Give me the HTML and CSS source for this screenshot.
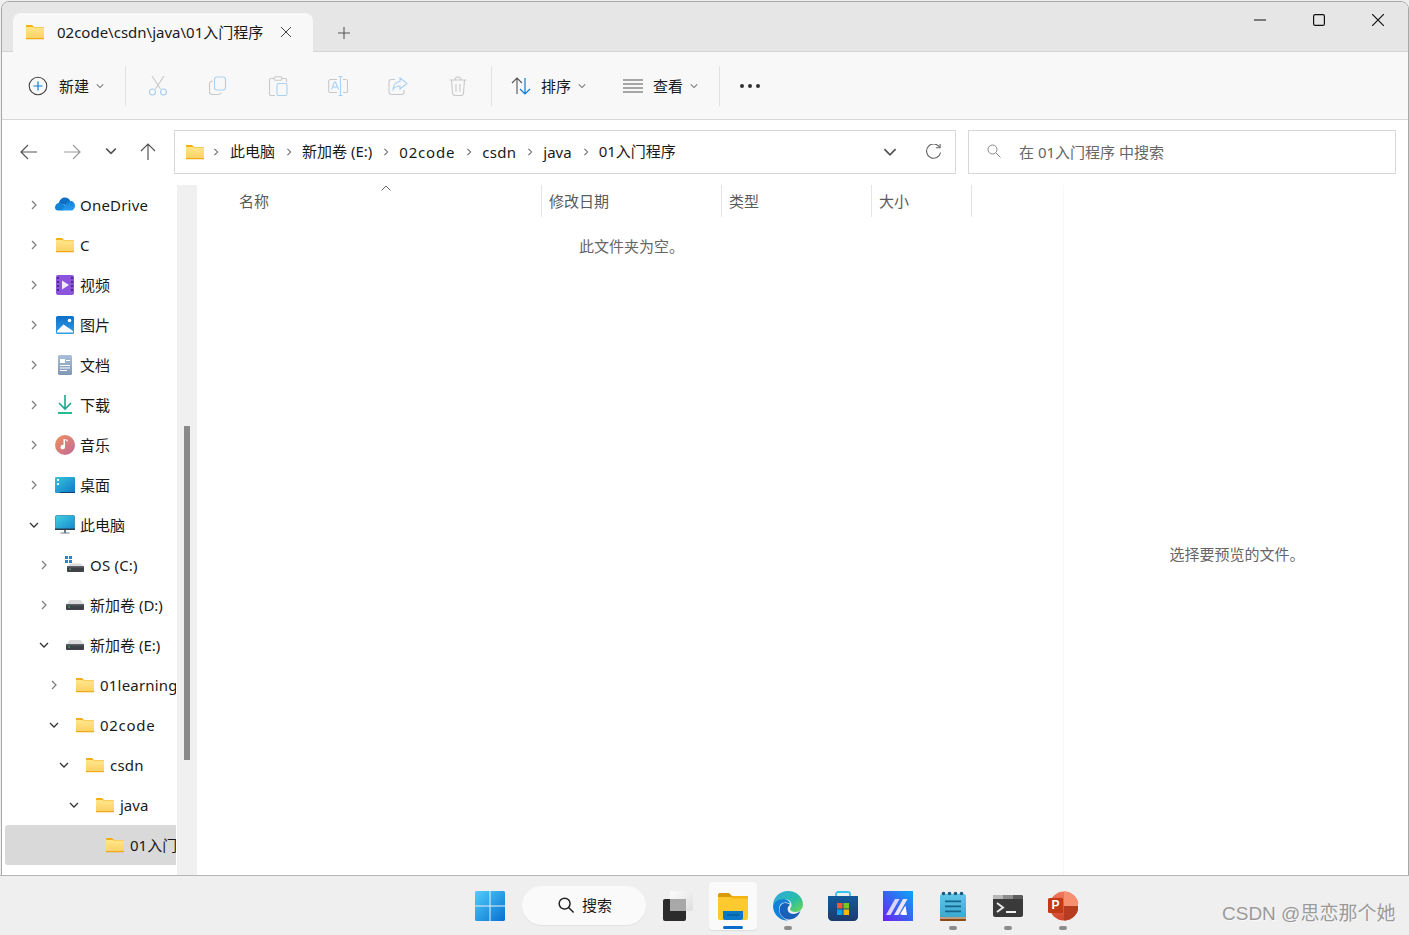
FILE: index.html
```html
<!DOCTYPE html>
<html lang="zh-CN">
<head>
<meta charset="utf-8">
<title>01入门程序 - 文件资源管理器</title>
<link rel="stylesheet" href="styles.css">
</head>
<body>
<svg class="sprite" aria-hidden="true">
  <defs>
    <linearGradient id="gFolder" x1="0" y1="0" x2="0" y2="1"><stop offset="0" stop-color="#ffe68a"/><stop offset="1" stop-color="#fcd064"/></linearGradient>
    <linearGradient id="gCloud" x1="0" y1="0" x2="0" y2="1"><stop offset="0" stop-color="#0f7fd8"/><stop offset="1" stop-color="#2a9df0"/></linearGradient>
    <linearGradient id="gMusic" x1="0" y1="0" x2="1" y2="1"><stop offset="0" stop-color="#f0905a"/><stop offset="1" stop-color="#c0699c"/></linearGradient>
    <linearGradient id="gDesk" x1="0" y1="0" x2="1" y2="1"><stop offset="0" stop-color="#37c6dc"/><stop offset="1" stop-color="#0f78c8"/></linearGradient>
    <linearGradient id="gDoc" x1="0" y1="0" x2="0" y2="1"><stop offset="0" stop-color="#a9bfd8"/><stop offset="1" stop-color="#7f98b4"/></linearGradient>
    <linearGradient id="gPic" x1="0" y1="0" x2="0" y2="1"><stop offset="0" stop-color="#0f6fc8"/><stop offset="1" stop-color="#2f9fe8"/></linearGradient>
    <linearGradient id="gMon" x1="0" y1="0" x2="1" y2="1"><stop offset="0" stop-color="#44d0e0"/><stop offset="1" stop-color="#1288d0"/></linearGradient>
    <linearGradient id="gWin" x1="0" y1="0" x2="1" y2="1"><stop offset="0" stop-color="#52cdfb"/><stop offset="1" stop-color="#0670d0"/></linearGradient>
    <linearGradient id="gEdge" x1="0" y1="0" x2="1" y2="1"><stop offset="0" stop-color="#2fa8e6"/><stop offset=".55" stop-color="#28bca8"/><stop offset="1" stop-color="#6fd84e"/></linearGradient>
    <linearGradient id="gMa" x1="1" y1="0" x2="0" y2="1"><stop offset="0" stop-color="#0aa6f5"/><stop offset="1" stop-color="#6a20f0"/></linearGradient>
    <linearGradient id="gStore" x1="0" y1="0" x2="0" y2="1"><stop offset="0" stop-color="#125a9c"/><stop offset="1" stop-color="#1c3a6c"/></linearGradient>
    <linearGradient id="gNote" x1="0" y1="0" x2="0" y2="1"><stop offset="0" stop-color="#5ec5e8"/><stop offset="1" stop-color="#3aa8d0"/></linearGradient>
    <linearGradient id="gPpt" x1="0" y1="0" x2="0" y2="1"><stop offset="0" stop-color="#f2785a"/><stop offset="1" stop-color="#d0452a"/></linearGradient>
    <linearGradient id="gView" x1="0" y1="0" x2="1" y2="1"><stop offset="0" stop-color="#fcfcfc"/><stop offset="1" stop-color="#dedede"/></linearGradient>
  </defs>
  <symbol id="folder" viewBox="0 0 20 16">
    <path d="M1 3V1.600C1 1.200 1.300 1 1.700 1H7l2 2z" fill="#f5ae16"/>
    <path d="M1 3h18v12H1z" fill="url(#gFolder)"/>
    <path d="M1 14h18v1.200H1z" fill="#efa91d"/>
    <path d="M8 3.600h11V3H8z" fill="#f5b52a"/>
  </symbol>
  <symbol id="chevR" viewBox="0 0 10 10"><path d="M3 1l4 4-4 4" fill="none" stroke="currentColor" stroke-width="1.300"/></symbol>
  <symbol id="chevD" viewBox="0 0 10 10"><path d="M1 3l4 4 4-4" fill="none" stroke="currentColor" stroke-width="1.300"/></symbol>
  <symbol id="onedrive" viewBox="0 0 20 14">
    <path d="M4 5.500C4.600 2.500 7 .5 10 .5c2.400 0 4.400 1.300 5.300 3.500L11 8 3 7z" fill="#0e6fc4"/>
    <path d="M0 10.500C0 8 2 6 4.600 6.100 6 6.200 9 8 11.500 9.500L8 13.500H3C1.300 13.500 0 12.200 0 10.500z" fill="#1085d8"/>
    <path d="M7 13.500l4-6.500c1-1.500 2.500-3 4.500-3 2.500 0 4.500 2 4.500 5 0 2.500-2 4.500-4 4.500z" fill="url(#gCloud)"/>
  </symbol>
  <symbol id="video" viewBox="0 0 20 20">
    <rect width="18" height="20" x="1" rx="2" fill="#8c54dc"/>
    <path d="M2 2h2v2H2zM2 6h2v2H2zM2 10h2v2H2zM2 14h2v2H2zM16 2h2v2h-2zM16 6h2v2h-2zM16 10h2v2h-2zM16 14h2v2h-2z" fill="#4a2a8c"/>
    <path d="M7 5.500l7 4.500-7 4.500z" fill="#f0e8fc"/>
  </symbol>
  <symbol id="picture" viewBox="0 0 20 20">
    <rect width="18" height="18" x="1" y="1" rx="1.500" fill="url(#gPic)"/>
    <path d="M2 17.500V16l6.500-6.500L18 16v1.500z" fill="#fff"/>
    <circle cx="14.500" cy="5.500" r="1.800" fill="#fff"/>
  </symbol>
  <symbol id="doc" viewBox="0 0 20 20">
    <rect x="3" y="0" width="14" height="20" rx="1.500" fill="url(#gDoc)"/>
    <path d="M5 4h5v4H5zM11 5h4v1h-4zM5 10h10v1H5zM5 12.500h10v1H5zM5 15h7v1H5z" fill="#fff"/>
  </symbol>
  <symbol id="download" viewBox="0 0 20 20">
    <path d="M10 0v13.500M4 8l6 6 6-6" fill="none" stroke="#1aa98c" stroke-width="1.600"/>
    <path d="M3 18h14" stroke="#24bd90" stroke-width="1.800"/>
  </symbol>
  <symbol id="music" viewBox="0 0 20 20">
    <circle cx="10" cy="10" r="10" fill="url(#gMusic)"/>
    <path d="M10 4.500v7.500a2.200 2.200 0 1 1-1.500-2V4l4 .8v2.200z" fill="#fff"/>
  </symbol>
  <symbol id="desktop" viewBox="0 0 20 16">
    <rect width="20" height="16" fill="url(#gDesk)" rx="1"/>
    <path d="M2 2h2v2H2zM2 6h2v2H2z" fill="#fff"/>
    <path d="M5 15h15v1H5z" fill="#123e70"/>
  </symbol>
  <symbol id="pc" viewBox="0 0 20 20">
    <rect x=".5" y=".5" width="19" height="14" rx="1" fill="url(#gMon)" stroke="#0f7090" stroke-width=".6"/>
    <path d="M0 13.500h20v1.500H0z" fill="#2a3a4a"/>
    <path d="M9 15h2v2.500H9zM5.500 17.500h9v1h-9z" fill="#6a7a8a"/>
  </symbol>
  <symbol id="drive" viewBox="0 0 20 10">
    <path d="M2 4L4 .5C4.200 .2 4.500 0 5 0h10c.5 0 .8.2 1 .5L19 4z" fill="#dcdcdc"/>
    <path d="M1 4h18v5c0 .5-.5 1-1 1H2c-.5 0-1-.5-1-1z" fill="#3e4248"/>
    <path d="M1 4h18v1.500H1z" fill="#5e6268"/>
    <path d="M3.500 6.500h1.200v1.200H3.500z" fill="#3fe05a"/>
  </symbol>
  <symbol id="osdrive" viewBox="0 0 20 20">
    <path d="M0 1h3v3H0zM4 1h3v3H4zM0 5h3v3H0zM4 5h3v3H4z" fill="#1e88d8"/>
    <path d="M3 11l2-2.500h11l2 2.500z" fill="#dcdcdc"/>
    <path d="M2 11h17v5c0 .5-.5 1-1 1H3c-.5 0-1-.5-1-1z" fill="#3e4248"/>
    <path d="M2 11h17v1.500H2z" fill="#5e6268"/>
    <path d="M4.500 13.500h1.200v1.200H4.500z" fill="#3fe05a"/>
  </symbol>
  <symbol id="win11" viewBox="0 0 30 30">
    <path d="M0 1.500C0 .7.700 0 1.500 0H14.500v14.500H0zM15.500 0H28.500c.8 0 1.500.7 1.500 1.500V14.500H15.500zM0 15.500H14.500V30H1.500C.7 30 0 29.300 0 28.500zM15.500 15.500H30V28.500c0 .8-.7 1.500-1.500 1.500H15.500z" fill="url(#gWin)"/>
  </symbol>
  <symbol id="taskview" viewBox="0 0 34 30">
    <rect x="0" y="8" width="23" height="22" rx="2" fill="#2b2b2b"/>
    <rect x="7" y="0" width="23" height="20" rx="1.500" fill="url(#gView)"/>
    <rect x="7" y="8" width="16" height="12" fill="#a8a8a8"/>
  </symbol>
  <symbol id="explorer" viewBox="0 0 30 28">
    <path d="M0 3C0 1.500 1 1 2 1h9l4 4H0z" fill="#d89a08"/>
    <path d="M0 5h13l3-1h14v22c0 1-1 2-2 2H2c-1 0-2-1-2-2z" fill="#fcc92e"/>
    <path d="M14 4h16v2.500H13z" fill="#f2b410"/>
    <path d="M5 19h20v7c0 1-1 2-2 2H7c-1 0-2-1-2-2z" fill="#0a78c8"/>
    <path d="M9 22.500h12v1H9z" fill="#0a4a80"/>
  </symbol>
  <symbol id="edge" viewBox="0 0 30 30">
    <path d="M15 0c8.500 0 15 6 15 13.500 0 5-4 7.500-7.500 7.500-3 0-5.500-1-5.500-3 0-1 1.500-1.500 1.500-4C18.500 10 15 8 11 8 5 8 1 12 0 15 0 6.500 6.500 0 15 0z" fill="url(#gEdge)"/>
    <path d="M0 15c1-4 5-7 10-7 4 0 7 2 7 5-1-1-3-1.500-5-1.500-4 0-6 3-6 7 0 5 4 9 9 11-8 .5-15-6-15-15z" fill="#1380d8"/>
    <path d="M15 28.500c-5-1-8.500-5-8.500-9.500 0-4 2.500-7 5.500-7 3 0 4 1 5 2-2 1-3 3-2 6 1 2.500 5 3.500 8 2.500 2-.7 3.500-1.500 4.500-3-1.500 5-6 9.500-12.500 9z" fill="#1a5fb8"/>
  </symbol>
  <symbol id="store" viewBox="0 0 30 30">
    <path d="M8 5V3c0-1 1-2 2-2h10c1 0 2 1 2 2v2" fill="none" stroke="#38c0f0" stroke-width="1.800"/>
    <path d="M0 5h30v21c0 2-2 4-4 4H4c-2 0-4-2-4-4z" fill="url(#gStore)"/>
    <path d="M9 12h5.500v5.500H9z" fill="#f05a28"/>
    <path d="M15.500 12H21v5.500h-5.500z" fill="#7cc520"/>
    <path d="M9 18.500h5.500V24H9z" fill="#0aa0f0"/>
    <path d="M15.500 18.500H21V24h-5.500z" fill="#fdb900"/>
  </symbol>
  <symbol id="ma" viewBox="0 0 30 30">
    <rect width="30" height="30" fill="url(#gMa)"/>
    <path d="M3 24L12 8h4.500L7.500 24z" fill="#d8d4fa"/>
    <path d="M11 24L20 8h4.500L15.500 24z" fill="#e8e6fc"/>
    <path d="M22.500 14.500l1.500 9.500h-4.500l-2.500-.8z" fill="#fff"/>
  </symbol>
  <symbol id="notepad" viewBox="0 0 30 30">
    <path d="M4 3h22c1 0 2 1 2 2v22H2V5c0-1 1-2 2-2z" fill="url(#gNote)"/>
    <path d="M2 26h26v3c0 .5-.5 1-1 1H3c-.5 0-1-.5-1-1z" fill="#8c4a14"/>
    <path d="M2 26.500h26v1H2z" fill="#f0f0f0"/>
    <g fill="#1a5a80"><circle cx="5.500" cy="2.500" r="1.800"/><circle cx="11.500" cy="2.500" r="1.800"/><circle cx="17.500" cy="2.500" r="1.800"/><circle cx="23.500" cy="2.500" r="1.800"/></g>
    <path d="M7 9.500h16v1.800H7zM7 14.500h16v1.800H7zM7 19.500h16v1.800H7z" fill="#16648c"/>
  </symbol>
  <symbol id="terminal" viewBox="0 0 30 22">
    <rect width="30" height="22" rx="2" fill="#3a3a3a"/>
    <path d="M0 2c0-1 1-2 2-2h8v4H0z" fill="#b8b8b8"/>
    <path d="M10 0h10v4H10z" fill="#8c8c8c"/>
    <path d="M20 0h8c1 0 2 1 2 2v2H20z" fill="#5c5c5c"/>
    <path d="M4 8l6 4.500L4 17" fill="none" stroke="#e8e8e8" stroke-width="2"/>
    <path d="M13 16h10v2H13z" fill="#f0f0f0"/>
  </symbol>
  <symbol id="ppt" viewBox="0 0 30 30">
    <circle cx="16" cy="15" r="14.500" fill="url(#gPpt)"/>
    <path d="M16 15h14.500A14.500 14.500 0 0 1 16 29.500z" fill="#b83c20"/>
    <path d="M16 .5A14.500 14.500 0 0 1 30.500 15H16z" fill="#f79070"/>
    <rect x="0" y="7" width="15" height="15" rx="1.500" fill="#c03a18"/>
  </symbol>
</svg>

<div class="window">
  <header class="titlebar">
    <div class="tab">
      <svg class="ic-tab"><use href="#folder"/></svg>
      <span class="tab-text">02code\csdn\java\01入门程序</span>
      <svg class="tab-close" viewBox="0 0 12 12"><path d="M1 1l10 10M11 1L1 11" stroke="#444" fill="none"/></svg>
    </div>
    <svg class="tab-new" viewBox="0 0 12 12"><path d="M6 0v12M0 6h12" stroke="#555" fill="none" stroke-width="1.100"/></svg>
    <div class="winctl">
      <div class="winbtn"><svg class="wc" viewBox="0 0 12 12"><path d="M0 6h12" stroke="#111" fill="none" stroke-width="1.200"/></svg></div>
      <div class="winbtn"><svg class="wc" viewBox="0 0 12 12"><rect x=".6" y=".6" width="10.800" height="10.800" rx="1.500" stroke="#111" fill="none" stroke-width="1.200"/></svg></div>
      <div class="winbtn"><svg class="wc" viewBox="0 0 12 12"><path d="M0 0l12 12M12 0L0 12" stroke="#111" fill="none" stroke-width="1.200"/></svg></div>
    </div>
  </header>

  <div class="toolbar">
    <button class="tb-new">
      <svg class="ic20" viewBox="0 0 20 20"><circle cx="10" cy="10" r="8.800" fill="none" stroke="#444" stroke-width="1.100"/><path d="M10 5.500v9M5.500 10h9" stroke="#0a7cd8" stroke-width="1.200"/></svg>
      <span class="tb-label">新建</span>
      <svg class="caret"><use href="#chevD"/></svg>
    </button>
    <span class="tb-sep sep-a"></span>
    <div class="tb-icons">
      <svg class="ic20" viewBox="0 0 20 20"><path d="M4 0l8.500 13M16 0L7.500 13" fill="none" stroke="#c8c8c8" stroke-width="1.100"/><circle cx="4.500" cy="16" r="3" fill="none" stroke="#a9d0f0" stroke-width="1.100"/><circle cx="15.500" cy="16" r="3" fill="none" stroke="#a9d0f0" stroke-width="1.100"/></svg>
      <svg class="ic20" viewBox="0 0 20 20"><rect x="6.500" y="1" width="11" height="13" rx="2.500" fill="none" stroke="#a9d0f0" stroke-width="1.100"/><path d="M5 5C3 5 1.500 6 1.500 8v7.500c0 2 1.500 3 3 3H10c1.500 0 2.800-.8 3-2" fill="none" stroke="#c8c8c8" stroke-width="1.100"/></svg>
      <svg class="ic20" viewBox="0 0 20 20"><path d="M6 2.500H3c-1 0-1.500 1-1.500 1.500v14c0 .6.500 1.500 1.500 1.500h4M14 2.500h3c1 0 1.500.5 1.500 1.500v2" fill="none" stroke="#c8c8c8" stroke-width="1.100"/><rect x="6" y=".7" width="8" height="3.500" rx="1.500" fill="none" stroke="#c8c8c8" stroke-width="1.100"/><rect x="9" y="7.500" width="10" height="12" rx="1.800" fill="none" stroke="#a9d0f0" stroke-width="1.100"/></svg>
      <svg class="ic20" viewBox="0 0 20 20"><path d="M9 3.500H2.500C1.500 3.500.7 4.300.7 5.300v9.400c0 1 .8 1.800 1.800 1.800H9M15 3.500h3c1 0 1.500.8 1.500 1.800v9.400c0 1-.5 1.800-1.500 1.800h-3" fill="none" stroke="#c8c8c8" stroke-width="1.100"/><path d="M3.500 13.500L6.500 6h1l3 7.500M4.600 11h4.800M12.500 0v20M10.500 .5h4M10.500 19.500h4" fill="none" stroke="#a9d0f0" stroke-width="1.100"/></svg>
      <svg class="ic20" viewBox="0 0 20 20"><path d="M7 3.500H3.500C2 3.500 1 4.500 1 6v10c0 1.500 1 2.500 2.500 2.500h10c1.500 0 2.500-1 2.500-2.500v-2" fill="none" stroke="#c8c8c8" stroke-width="1.100"/><path d="M12 2l7 5.500-7 5.500v-3c-3 0-5 1-7 3.500 .5-4.500 3-7.500 7-8z" fill="none" stroke="#a9d0f0" stroke-width="1.100"/></svg>
      <svg class="ic20" viewBox="0 0 20 20"><path d="M1.500 4h17M7 4c0-2 1-3 3-3s3 1 3 3M3.500 4l1 13c.1 1.500 1 2.500 2.500 2.500h6c1.500 0 2.400-1 2.500-2.500l1-13M8 8v7.500M12 8v7.500" fill="none" stroke="#c8c8c8" stroke-width="1.100"/></svg>
    </div>
    <span class="tb-sep sep-b"></span>
    <button class="tb-sort">
      <svg class="ic20" viewBox="0 0 20 20"><path d="M6 18V2M1 7l5-5 5 5" fill="none" stroke="#555" stroke-width="1.100"/><path d="M14 2v16M9 13l5 5 5-5" fill="none" stroke="#0a7cd8" stroke-width="1.200"/></svg>
      <span class="tb-label">排序</span>
      <svg class="caret"><use href="#chevD"/></svg>
    </button>
    <button class="tb-view">
      <svg class="ic20" viewBox="0 0 20 20"><path d="M0 4h20M0 8h20M0 12h20M0 16h20" fill="none" stroke="#555"/></svg>
      <span class="tb-label">查看</span>
      <svg class="caret"><use href="#chevD"/></svg>
    </button>
    <span class="tb-sep sep-c"></span>
    <div class="tb-more"><i></i><i></i><i></i></div>
  </div>

  <nav class="addressrow">
    <svg class="nav n-back" viewBox="0 0 18 18"><path d="M17 9H1M8 2L1 9l7 7" fill="none" stroke="#555" stroke-width="1.200"/></svg>
    <svg class="nav n-fwd" viewBox="0 0 18 18"><path d="M1 9h16M10 2l7 7-7 7" fill="none" stroke="#999" stroke-width="1.200"/></svg>
    <svg class="n-down"><use href="#chevD"/></svg>
    <svg class="nav n-up" viewBox="0 0 18 18"><path d="M9 17V1M2 8l7-7 7 7" fill="none" stroke="#555" stroke-width="1.200"/></svg>
    <div class="addrbox">
      <svg class="ic-crumb"><use href="#folder"/></svg>
      <svg class="crumb-sep first"><use href="#chevR"/></svg>
      <span class="crumb zh">此电脑</span>
      <svg class="crumb-sep"><use href="#chevR"/></svg>
      <span class="crumb zh">新加卷 (E:)</span>
      <svg class="crumb-sep"><use href="#chevR"/></svg>
      <span class="crumb latin code">02code</span>
      <svg class="crumb-sep"><use href="#chevR"/></svg>
      <span class="crumb latin csdn">csdn</span>
      <svg class="crumb-sep"><use href="#chevR"/></svg>
      <span class="crumb latin">java</span>
      <svg class="crumb-sep"><use href="#chevR"/></svg>
      <span class="crumb zh">01入门程序</span>
      <svg class="addr-drop"><use href="#chevD"/></svg>
      <svg class="addr-refresh" viewBox="0 0 18 18"><path d="M15.500 3.500A7.500 7.500 0 1 0 16.500 9" fill="none" stroke="#666" stroke-width="1.200"/><path d="M16 0v4h-4.500" fill="none" stroke="#666" stroke-width="1.200"/></svg>
    </div>
    <div class="searchbox">
      <svg class="search-ic" viewBox="0 0 14 14"><circle cx="5.500" cy="5.500" r="4.500" fill="none" stroke="#888"/><path d="M9 9l4.500 4.500" stroke="#888"/></svg>
      <span class="search-text">在 01入门程序 中搜索</span>
    </div>
  </nav>

  <div class="content">
    <aside class="sidebar">
      <ul class="tree">
        <li class="row l0"><svg class="chev"><use href="#chevR"/></svg><svg class="ic ic-cloud"><use href="#onedrive"/></svg><span class="lat">OneDrive</span></li>
        <li class="row l0"><svg class="chev"><use href="#chevR"/></svg><svg class="ic"><use href="#folder"/></svg><span class="lat">C</span></li>
        <li class="row l0"><svg class="chev"><use href="#chevR"/></svg><svg class="ic"><use href="#video"/></svg><span class="zh">视频</span></li>
        <li class="row l0"><svg class="chev"><use href="#chevR"/></svg><svg class="ic"><use href="#picture"/></svg><span class="zh">图片</span></li>
        <li class="row l0"><svg class="chev"><use href="#chevR"/></svg><svg class="ic"><use href="#doc"/></svg><span class="zh">文档</span></li>
        <li class="row l0"><svg class="chev"><use href="#chevR"/></svg><svg class="ic"><use href="#download"/></svg><span class="zh">下载</span></li>
        <li class="row l0"><svg class="chev"><use href="#chevR"/></svg><svg class="ic"><use href="#music"/></svg><span class="zh">音乐</span></li>
        <li class="row l0"><svg class="chev"><use href="#chevR"/></svg><svg class="ic"><use href="#desktop"/></svg><span class="zh">桌面</span></li>
        <li class="row l0"><svg class="chev open"><use href="#chevD"/></svg><svg class="ic"><use href="#pc"/></svg><span class="zh">此电脑</span></li>
        <li class="row l1"><svg class="chev"><use href="#chevR"/></svg><svg class="ic"><use href="#osdrive"/></svg><span class="lat">OS (C:)</span></li>
        <li class="row l1"><svg class="chev"><use href="#chevR"/></svg><svg class="ic ic-drive"><use href="#drive"/></svg><span class="zh">新加卷 (D:)</span></li>
        <li class="row l1"><svg class="chev open"><use href="#chevD"/></svg><svg class="ic ic-drive"><use href="#drive"/></svg><span class="zh">新加卷 (E:)</span></li>
        <li class="row l2"><svg class="chev"><use href="#chevR"/></svg><svg class="ic"><use href="#folder"/></svg><span class="lat">01learning</span></li>
        <li class="row l2"><svg class="chev open"><use href="#chevD"/></svg><svg class="ic"><use href="#folder"/></svg><span class="lat code">02code</span></li>
        <li class="row l3"><svg class="chev open"><use href="#chevD"/></svg><svg class="ic"><use href="#folder"/></svg><span class="lat">csdn</span></li>
        <li class="row l4"><svg class="chev open"><use href="#chevD"/></svg><svg class="ic"><use href="#folder"/></svg><span>java</span></li>
        <li class="row l5 selected"><span class="chev"></span><svg class="ic"><use href="#folder"/></svg><span class="zh">01入门程序</span></li>
      </ul>
    </aside>
    <div class="scrolltrack"><div class="scrollthumb"></div></div>
    <main class="filelist">
      <div class="colhead">
        <div class="col c-name">名称<svg class="sort-up" viewBox="0 0 10 6"><path d="M.5 5.500L5 1l4.500 4.500" fill="none" stroke="#666"/></svg></div>
        <div class="col c-date">修改日期</div>
        <div class="col c-type">类型</div>
        <div class="col c-size">大小</div>
      </div>
      <p class="empty">此文件夹为空。</p>
    </main>
    <section class="preview"><p class="preview-text">选择要预览的文件。</p></section>
  </div>
</div>

<footer class="taskbar">
  <svg class="tk"><use href="#win11"/></svg>
  <div class="tk-search">
    <svg class="tk-search-ic" viewBox="0 0 18 18"><circle cx="7" cy="7" r="5.800" fill="none" stroke="#222" stroke-width="1.600"/><path d="M11.200 11.200L16.500 16.500" stroke="#222" stroke-width="1.600"/></svg>
    <span>搜索</span>
  </div>
  <svg class="tk tk-view"><use href="#taskview"/></svg>
  <div class="tk-tile"><svg class="tk"><use href="#explorer"/></svg><i class="tk-active"></i></div>
  <div class="tk-app"><svg class="tk"><use href="#edge"/></svg><i class="tk-dot"></i></div>
  <div class="tk-app"><svg class="tk"><use href="#store"/></svg></div>
  <div class="tk-app"><svg class="tk"><use href="#ma"/></svg></div>
  <div class="tk-app"><svg class="tk"><use href="#notepad"/></svg><i class="tk-dot"></i></div>
  <div class="tk-app"><svg class="tk"><use href="#terminal"/></svg><i class="tk-dot"></i></div>
  <div class="tk-app tk-ppt"><svg class="tk"><use href="#ppt"/></svg><span class="ppt-p">P</span><i class="tk-dot"></i></div>
  <div class="watermark">CSDN @思恋那个她</div>
</footer>
</body>
</html>
```
FILE: styles.css
```css
* { box-sizing: border-box; }
html, body { margin: 0; padding: 0; }
body {
  width: 1409px; height: 935px; overflow: hidden; position: relative;
  background: #efefef; color: #1a1a1a;
  font-family: "Noto Sans", "Noto Sans CJK SC", sans-serif; font-size: 15px;
}
ul, p { margin: 0; padding: 0; list-style: none; }
button { all: unset; display: flex; align-items: center; }
.sprite { position: absolute; width: 0; height: 0; }

.window {
  width: 1408px; height: 875px; margin: 1px 0 0 1px;
  display: flex; flex-direction: column; overflow: hidden;
  background: #fff; border: 1px solid #a8a8a8; border-radius: 8px 8px 0 0;
}

.titlebar {
  height: 50px; flex: none; display: flex; align-items: flex-start;
  padding: 11px 0 0 11px; background: #e6e6e6; border-bottom: 1px solid #d4d4d4;
}
.tab {
  width: 300px; height: 39px; display: flex; align-items: center;
  padding: 0 0 2px 12px; background: #f8f8f8; border-radius: 8px 8px 0 0;
}
.ic-tab { width: 20px; height: 16px; flex: none; }
.tab-text { margin-left: 12px; width: 223px; white-space: nowrap; }
.tab-close { width: 12px; height: 12px; flex: none; }
.tab-new { width: 12px; height: 12px; margin: 14px 0 0 25px; }
.winctl { margin-left: auto; display: flex; margin-top: -11px; margin-right: 1px; }
.winbtn { width: 59px; height: 36px; display: flex; align-items: center; justify-content: center; }
.wc { width: 12px; height: 12px; }

.toolbar {
  height: 68px; flex: none; display: flex; align-items: center;
  background: #f8f8f8; border-bottom: 1px solid #d8d8d8;
}
.ic20 { width: 20px; height: 20px; flex: none; }
.tb-new { margin-left: 26px; }
.tb-label { margin-left: 11px; white-space: nowrap; width: 30px; }
.tb-sort .tb-label, .tb-view .tb-label { margin-left: 10px; }
.caret { width: 8px; height: 8px; margin-left: 7px; color: #777; }
.tb-sep { width: 1px; height: 40px; background: #e2e2e2; flex: none; }
.sep-a { margin-left: 21px; }
.tb-icons { display: flex; gap: 40px; margin-left: 22px; }
.sep-b { margin-left: 23px; }
.tb-sort { margin-left: 19px; }
.tb-view { margin-left: 37px; }
.sep-c { margin-left: 21px; }
.tb-more { margin-left: 20px; display: flex; gap: 4px; }
.tb-more i { width: 4px; height: 4px; border-radius: 50%; background: #333; display: block; }

.addressrow { height: 65px; flex: none; display: flex; align-items: flex-start; padding-top: 10px; background: #fff; }
.nav { width: 18px; height: 18px; flex: none; margin-top: 13px; }
.n-back { margin-left: 18px; }
.n-fwd { margin-left: 25px; }
.n-down { width: 12px; height: 12px; margin: 15px 0 0 24px; color: #555; flex: none; }
.n-up { margin-left: 22px; }
.addrbox {
  width: 782px; height: 44px; margin-left: 17px; flex: none;
  display: flex; align-items: center; padding-left: 10px;
  border: 1px solid #d8d8d8;
}
.ic-crumb { width: 20px; height: 16px; flex: none; }
.crumb-sep { width: 8px; height: 8px; margin: 0 9px 0 10px; color: #666; flex: none; }
.crumb-sep.first { margin: 0 10px 0 7px; }
.crumb { white-space: nowrap; }
.crumb.zh { margin-top: -3px; }
.crumb.latin { margin-top: -1px; }
.crumb.code { letter-spacing: .8px; }
.crumb.csdn { letter-spacing: .3px; }
.addr-drop { width: 14px; height: 14px; margin-left: auto; color: #555; flex: none; }
.addr-refresh { width: 17px; height: 17px; margin: 0 13px 0 28px; flex: none; }
.searchbox {
  width: 428px; height: 44px; margin-left: 12px; flex: none;
  display: flex; align-items: center; padding-left: 18px;
  border: 1px solid #d8d8d8; color: #666;
}
.search-ic { width: 14px; height: 14px; margin-top: -3px; flex: none; }
.search-text { margin: -2px 0 0 18px; white-space: nowrap; }

.content { flex: 1; min-height: 0; display: flex; }
.sidebar { width: 175px; flex: none; overflow: hidden; padding-left: 3px; }
.row { width: 171px; height: 40px; display: flex; align-items: center; overflow: hidden; white-space: nowrap; border-radius: 3px 0 0 3px; }
.l0 { padding-left: 24px; }
.l1 { padding-left: 34px; }
.l2 { padding-left: 44px; }
.l3 { padding-left: 54px; }
.l4 { padding-left: 64px; }
.l5 { padding-left: 74px; }
.selected { background: #d9d9d9; }
.chev { width: 10px; height: 10px; flex: none; color: #808080; margin-top: -1px; }
.chev.open { color: #333; }
.ic { width: 20px; height: 20px; flex: none; margin: -1px 5px 0 16px; }
.ic-cloud { height: 14px; margin-top: -2px; }
.ic-drive { height: 10px; }
.row span:last-child { flex: none; }
.row span.zh { margin-top: -2px; }
.row span.lat { letter-spacing: .2px; }
.row span.code { letter-spacing: .7px; }

.scrolltrack { width: 20px; flex: none; background: #f0f0f0; padding: 241px 0 0 7px; }
.scrollthumb { width: 6px; height: 334px; background: #8a8a8a; }

.filelist { width: 867px; flex: none; position: relative; border-right: 1px solid #f7f7f7; }
.colhead { display: flex; height: 32px; color: #5a5a5a; }
.col { height: 32px; display: flex; align-items: center; padding: 0 0 2px 7px; border-right: 1px solid #e4e4e4; white-space: nowrap; position: relative; }
.c-name { width: 345px; padding-left: 42px; }
.c-date { width: 180px; }
.c-type { width: 150px; }
.c-size { width: 100px; }
.sort-up { position: absolute; left: 184px; top: 0; width: 10px; height: 6px; }
.empty { margin: 19px 0 0 382px; color: #666; line-height: 20px; }

.preview { flex: 1; display: flex; align-items: center; justify-content: center; color: #666; padding-top: 46px; }
.preview-text { margin: 0 0 0 2px; }

.taskbar {
  position: relative; height: 60px; margin-top: -1px;
  display: flex; align-items: center; padding: 0 0 0 475px;
  background: #efefef; border-top: 1px solid #b4b4b4;
}
.tk { width: 30px; height: 30px; flex: none; display: block; }
.tk-search {
  width: 124px; height: 39px; margin-left: 17px; border-radius: 20px;
  display: flex; align-items: center; padding-left: 36px; background: #fafafa;
  box-shadow: 0 1px 1px #e2e2e2;
}
.tk-search-ic { width: 17px; height: 17px; flex: none; }
.tk-search span { margin: -2px 0 0 7px; }
.tk-view { margin-left: 17px; width: 34px; }
.tk-tile {
  width: 48px; height: 48px; margin-left: 12px; position: relative;
  display: flex; align-items: center; justify-content: center;
  background: #fafafa; border-radius: 4px; box-shadow: 0 1px 1px #dcdcdc;
}
.tk-app { width: 30px; height: 30px; margin-left: 25px; position: relative; }
.tk-tile + .tk-app { margin-left: 16px; }
.tk-active { position: absolute; left: 14px; bottom: 1px; width: 20px; height: 3px; border-radius: 2px; background: #0a6cc8; }
.tk-dot { position: absolute; left: 11px; bottom: -9px; width: 8px; height: 4px; border-radius: 2px; background: #8c8c8c; }
.ppt-p { position: absolute; left: 0; top: 6px; width: 15px; text-align: center; color: #fff; font-size: 12px; font-weight: 700; line-height: 17px; font-family: "Liberation Sans", sans-serif; }
.watermark {
  position: absolute; left: 1222px; top: 26px; font-size: 19px; line-height: 24px;
  color: #9a9a9a; white-space: nowrap; font-family: "Liberation Sans", "Noto Sans CJK SC", sans-serif;
  text-shadow: 1px 1px 0 #f8f8f8;
}
```
